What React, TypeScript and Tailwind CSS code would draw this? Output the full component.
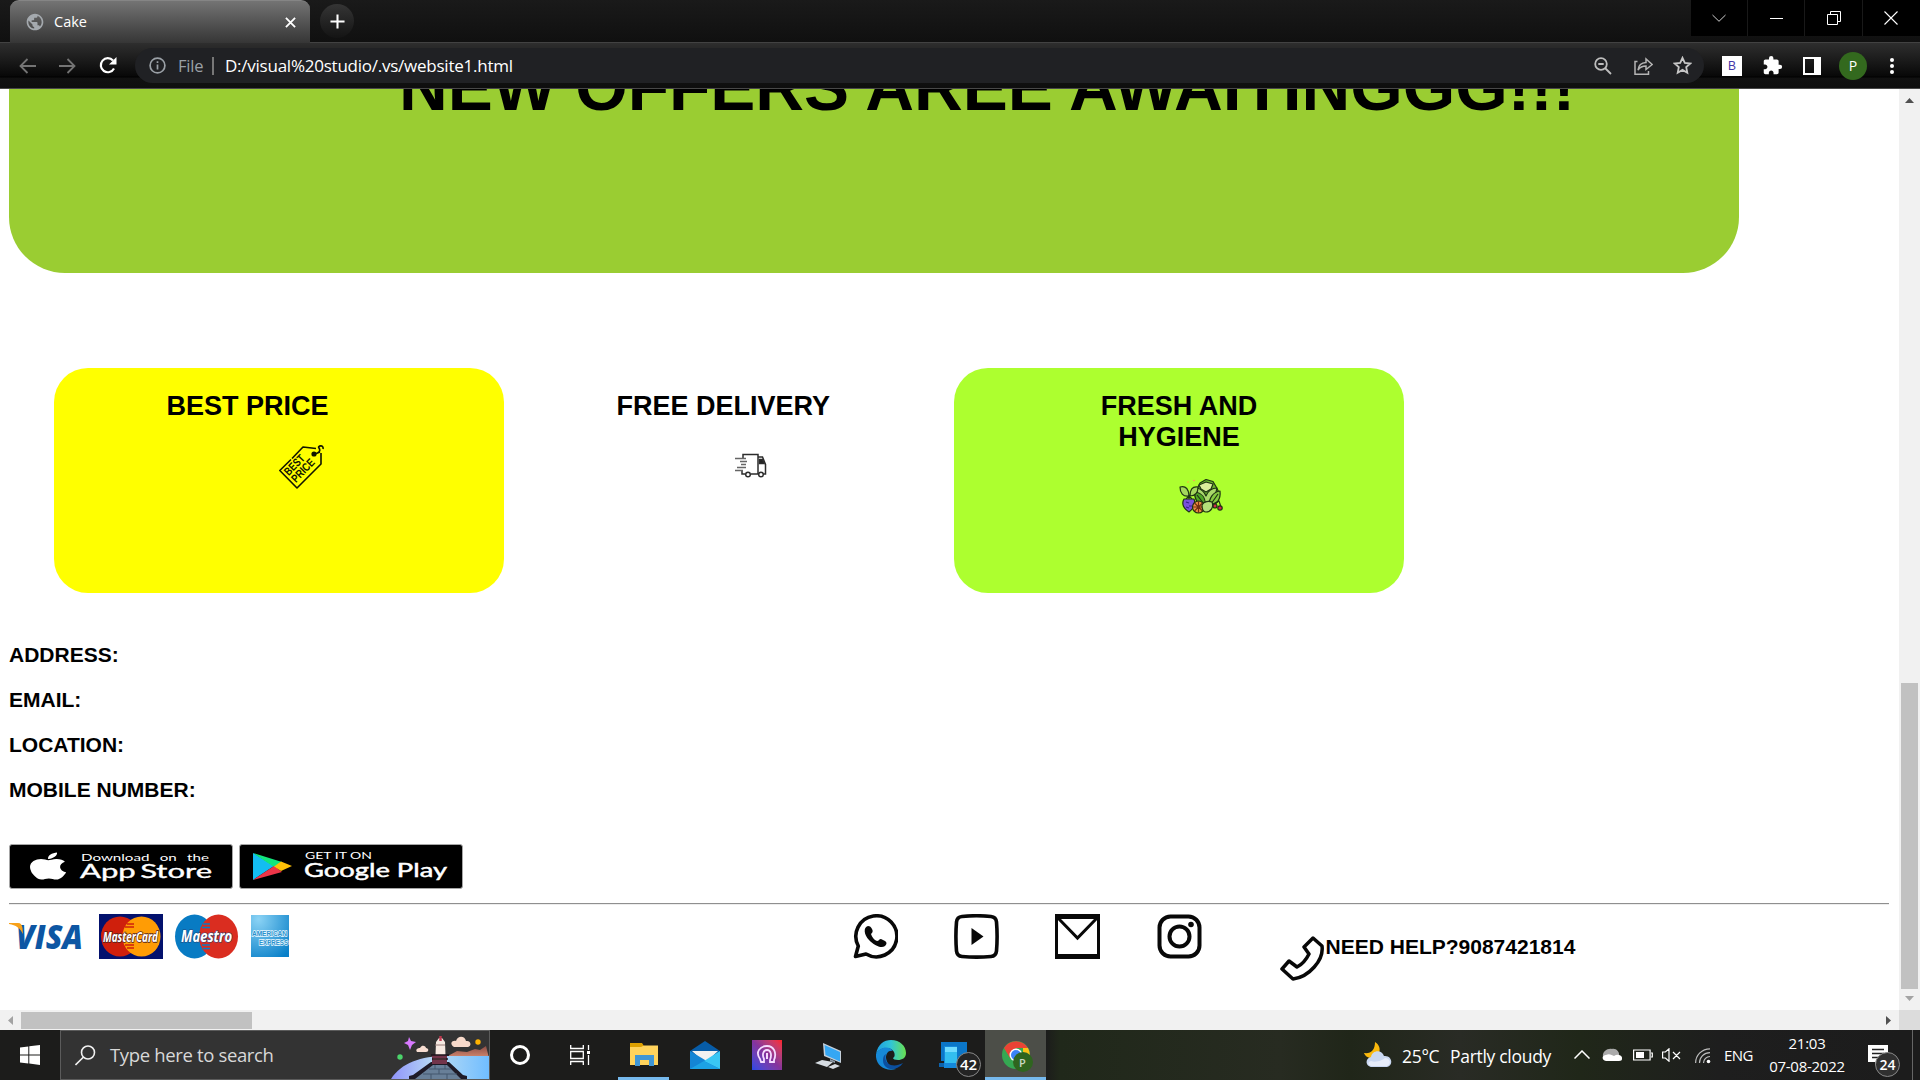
import React from 'react';
import { FaApple } from 'react-icons/fa';
import { MdExtension, MdPublic } from 'react-icons/md';

const segoe = "font-['Open_Sans','Noto_Sans',sans-serif]";

function TabStrip() {
  return (
    <div className="flex h-[42px] items-start bg-linear-to-b from-[#1a1a1a] to-[#101010]">
      <div className="ml-[10px] flex h-[43px] w-[300px] items-center rounded-t-[9px] border-t border-[#858585] bg-linear-to-b from-[#747474] to-[#363636] pr-[14px] pl-[15px]">
        <MdPublic className="size-5 text-[#a4a9ae]" />
        <span className="ml-[9px] flex-1 text-[14.5px] leading-5 text-white">Cake</span>
        <svg className="size-[11px]" viewBox="0 0 12 12" stroke="#fff" strokeWidth="2"><path d="M1 1l10 10M11 1L1 11" /></svg>
      </div>
      <div className="mt-[4px] ml-[10px] flex size-[34px] items-center justify-center rounded-full bg-linear-to-b from-[#353535] to-[#141414]">
        <svg className="size-[15px]" viewBox="0 0 16 16" stroke="#fff" strokeWidth="2.2"><path d="M8 .5v15M.5 8h15" /></svg>
      </div>
      <div className="ml-auto flex h-9 w-[229px] divide-x divide-[#191919] bg-black">
        <div className="flex w-[57px] items-center justify-center">
          <svg className="h-2 w-[14px]" viewBox="0 0 14 8" fill="none" stroke="#d0d0d0"><path d="M.5 1L7 7.300 13.500 1" /></svg>
        </div>
        <div className="flex w-[57px] items-center justify-center"><div className="h-px w-[13px] bg-white" /></div>
        <div className="flex w-[58px] items-center justify-center">
          <svg className="size-[14px]" viewBox="0 0 14 14" fill="none" stroke="#fff"><path d="M.5 3.500h10v10H.5zM3.500 3V.5h10v10H11" /></svg>
        </div>
        <div className="flex flex-1 items-center justify-center pr-px">
          <svg className="size-[14px]" viewBox="0 0 14 14" stroke="#fff" strokeWidth="1.1"><path d="M.5.5l13 13M13.500.5l-13 13" /></svg>
        </div>
      </div>
    </div>
  );
}

function Toolbar() {
  return (
    <div className="flex h-[47px] items-center border-t border-b border-t-[#424242] border-b-[#484848] bg-[linear-gradient(#2e2e2e_0px,#1c1c1c_16px,#080808_33px,#000_34px,#111_35px,#0e0e0e_46px)]">
      <svg className="ml-[19px] h-4 w-[17px]" viewBox="0 0 17 16" fill="none" stroke="#747474" strokeWidth="1.8"><path d="M17 8H1.500M8.500 1l-7 7 7 7" /></svg>
      <svg className="ml-[23px] h-4 w-[17px]" viewBox="0 0 17 16" fill="none" stroke="#747474" strokeWidth="1.8"><path d="M0 8h15.500M8.500 1l7 7-7 7" /></svg>
      <svg className="ml-[23px] h-[17px] w-[18px]" viewBox="0 0 18 17" fill="none" stroke="#fff" strokeWidth="2.2"><path d="M15 11.500A7 7 0 1 1 14 3.500" /><path d="M17.500 0v7.500H10z" fill="#fff" stroke="none" /></svg>
      <div className="ml-[18px] flex h-[35px] w-[1569px] items-center rounded-full bg-[#202124] pr-[12px] pl-[14px]">
        <svg className="size-[17px]" viewBox="0 0 17 17" fill="none" stroke="#9aa0a6" strokeWidth="1.7"><circle cx="8.5" cy="8.5" r="7.4" /><path d="M8.500 7.500v5M8.500 4.200v1.900" /></svg>
        <span className="ml-[12px] w-[34px] text-[16.5px] leading-5 tracking-[-0.2px] text-[#9aa0a6]">File</span>
        <div className="h-[18px] w-[2px] bg-[#777]" />
        <span className="ml-[11px] flex-1 text-[17px] leading-5 tracking-[-0.24px] text-white">D:/visual%20studio/.vs/website1.html</span>
        <svg className="size-[18px]" viewBox="0 0 18 18" fill="none" stroke="#bdbdbd" strokeWidth="1.8"><circle cx="7" cy="7" r="5.8" /><path d="M11 11l6 6M4.300 7h5.400" /></svg>
        <svg className="ml-[22px] h-[18px] w-[19px]" viewBox="0 0 19 18" fill="none" stroke="#b4b4b4" strokeWidth="1.5"><path d="M3.500 4.500H1v12.700h13.500V14M4 13c.6-5 3.500-7.200 8-7.400V2l6.200 5.500L12 12.500V9C8.500 9 6 10 4 13z" /></svg>
        <svg className="ml-[20px] size-[19px]" viewBox="0 0 19 19" fill="none" stroke="#c6c6c6" strokeWidth="1.8"><path d="M9.500 1.800l2.300 5.100 5.500.6-4.100 3.700 1.100 5.500-4.800-2.800-4.800 2.800 1.100-5.500-4.100-3.700 5.500-.6z" /></svg>
      </div>
      <div className="ml-[18px] flex size-5 items-center justify-center bg-white font-['Liberation_Sans',sans-serif] text-[12px] text-[#4437a8]">B</div>
      <MdExtension className="ml-[20px] size-[21px] text-white" />
      <div className="ml-[20px] h-[18px] w-[18px] border-2 border-r-[7px] border-white" />
      <div className="ml-[18px] flex size-7 items-center justify-center rounded-full bg-[#33691e] text-[14px] text-white">P</div>
      <div className="ml-[23px] flex flex-col gap-[2px]">
        <i className="size-1 rounded-full bg-white" /><i className="size-1 rounded-full bg-white" /><i className="size-1 rounded-full bg-white" />
      </div>
    </div>
  );
}

function PriceTag() {
  return (
    <svg className="size-[45px]" viewBox="0 0 45 45" fill="none" stroke="#111500" strokeWidth="1.600">
      <path d="M13 14.500L24 3l13 1.500M42 9v11L18 44 .8 26.500 12 15.500" strokeLinejoin="round" />
      <circle cx="35" cy="10" r="1.800" fill="#111500" /><path d="M35 10c5-1 7-3 5-6-2-2 5-4 4 1M36 10l5-2" />
      <g fill="#111500" stroke="none" fontFamily="Liberation Sans" fontSize="11.500" fontWeight="bold" transform="translate(10.500 31.500) rotate(-46)">
        <text x="-1" y="0" textLength="24" lengthAdjust="spacingAndGlyphs">BEST</text>
        <text x="-1" y="10" textLength="28" lengthAdjust="spacingAndGlyphs">PRICE</text>
      </g>
    </svg>
  );
}

function Truck() {
  return (
    <svg className="h-[25px] w-[32px]" viewBox="0 0 32 25" fill="none" stroke="#2c2c2c" strokeWidth="1.500">
      <path d="M8 5V1.500h15V21H16M10 21H7v-3M23 4h4.500l3 7.500V21h-3M23 21h1" />
      <path d="M24.500 6.500h3l1.500 4h-4.500z" fill="#222" />
      <circle cx="13" cy="21.500" r="2.300" fill="#fff" /><circle cx="26" cy="21.500" r="2.300" fill="#fff" />
      <path d="M0 5.500h11M5 8.500h7M6 11.500h5M2 14.500h9M0 17.500h8" stroke="#666" />
    </svg>
  );
}

function Vegetables() {
  return (
    <svg className="h-[35px] w-[44px]" viewBox="0 0 44 35" stroke="#1f3313" strokeWidth="1.2" strokeLinejoin="round">
      <path d="M18 10l3-6 6-3.500 7 2 3.500 6 2.500 5-1 9-9 7-10-4-4-9z" fill="#69b52c" />
      <path d="M20 6l7-3 7 2-2 5-5 3-5-3z" fill="#dcee9c" />
      <path d="M18 9c4 1 7 3 9 8 2-5 5-8 11-8-1 7-4 11-9 14h-4c-4-2-7-7-7-14z" fill="#a9d86a" />
      <path d="M16 13c7 1 11 6 10 14-7-1-11-7-10-14z" fill="#4fa425" />
      <path d="M41 12c1 8-3 14-11 15 0-8 4-14 11-15z" fill="#85c940" />
      <path d="M18 16l7 9M39 15l-7 10" fill="none" />
      <path d="M1 8c6-2 9 3 9 9-6 1-9-3-9-9zM19 8c0 6-3 9-8 9 0-6 2-10 8-9z" fill="#a4d75d" />
      <path d="M10 16v5M7 20l3-3 3 3" fill="none" />
      <path d="M5 20h10c2 5-1 10-5 13-5-3-8-8-5-13z" fill="#7952dc" />
      <path d="M7 23l3 1M10 27h4M7 28l3 1" stroke="#35208a" />
      <circle cx="19.500" cy="28" r="6" fill="#ef8d42" /><path d="M19.500 22v12M14 28h11M15.500 24l8 8M23.500 24l-8 8" stroke="#713012" />
      <path d="M23 26c2-4 7-4 10-3 2 5-1 10-6 10-3 0-4-3-4-7z" fill="#b4df7a" />
      <path d="M34 25l6-3 2 6" fill="none" /><circle cx="36" cy="27" r="2" fill="#d42352" /><circle cx="41" cy="29" r="2.200" fill="#d42352" />
      <circle cx="9" cy="3" r=".8" fill="#ffad3d" stroke="none" /><circle cx="15" cy="1.500" r=".8" fill="#ff8b66" stroke="none" />
    </svg>
  );
}

function OfferCard({ title, bg, children }: { title: React.ReactNode; bg: string; children: React.ReactNode }) {
  return (
    <div className={'flex h-[225px] w-[450px] flex-col rounded-[34px] px-[112.5px] pt-[23px] ' + bg}>
      <h3 className="w-fit max-w-full text-center text-[27px] leading-[31px] font-bold">{title}</h3>
      {children}
    </div>
  );
}

function StoreBadges() {
  return (
    <div className="mt-[42px] ml-[9px] flex gap-[6px]">
      <div className="flex h-[45px] w-[224px] overflow-hidden rounded-[3px] border border-[#a6a6a6] bg-black">
        <FaApple className="mt-[7px] ml-[20px] h-[28px] w-[36px] text-white" viewBox="4 24 376 464" preserveAspectRatio="none" />
        <svg className="h-[43px] w-[155px]" viewBox="0 0 155 43" fill="#fff" fontFamily="Lato">
          <text x="15" y="16" fontSize="9.500" wordSpacing="4" textLength="128" lengthAdjust="spacingAndGlyphs">Download on the</text>
          <text x="14" y="32.500" fontSize="18.500" wordSpacing="-2" stroke="#fff" strokeWidth=".35" textLength="132" lengthAdjust="spacingAndGlyphs">App Store</text>
        </svg>
      </div>
      <div className="flex h-[45px] w-[224px] overflow-hidden rounded-[3px] border border-[#a6a6a6] bg-black">
        <svg className="mt-[8px] ml-[12px] h-[27px] w-[41px]" viewBox="0 0 41 27">
          <path d="M1 0v27L22 13z" fill="#13bdf2" /><path d="M1 0l29 9-8 5z" fill="#12e77c" /><path d="M1 27l29-8-8-6z" fill="#ed3548" /><path d="M29 8.500L40 13l-11 5-7-4.500z" fill="#ffc107" />
        </svg>
        <svg className="h-[43px] w-[168px]" viewBox="0 0 168 43" fill="#fff" fontFamily="Lato">
          <text x="12" y="14" fontSize="9" textLength="67" lengthAdjust="spacingAndGlyphs">GET IT ON</text>
          <text x="11" y="31.500" fontSize="18.500" stroke="#fff" strokeWidth=".45" textLength="143" lengthAdjust="spacingAndGlyphs">Google Play</text>
        </svg>
      </div>
    </div>
  );
}

function PaymentLogos() {
  return (
    <div className="flex items-start">
      <svg className="h-[45px] w-[75px]" viewBox="0 0 75 45">
        <g fontFamily="Open Sans" fontWeight="800" fontStyle="italic" fill="#0d56a3"><text x="7" y="34.500" fontSize="34" textLength="67" lengthAdjust="spacingAndGlyphs">VISA</text></g>
        <path d="M0 9h9c3 0 4 2 4.500 5l.5 6C11 14 7 11 0 10z" fill="#f7a11a" />
      </svg>
      <svg className="ml-[14.500px] h-[45px] w-[64px]" viewBox="0 0 64 45">
        <path d="M0 0h64v45H0z" fill="#03116d" />
        <ellipse cx="21" cy="22.500" rx="19" ry="20" fill="#cf1f0c" /><ellipse cx="42.500" cy="22.500" rx="19" ry="20" fill="#ff9c05" />
        <path d="M28 10h7M26 13h9M26 31h9M28 34h7" stroke="#cf1f0c" strokeWidth="1.500" />
        <text x="4" y="27.500" fontFamily="Open Sans" fontStyle="italic" fontWeight="bold" fontSize="14" fill="#fff" stroke="#53201a" strokeWidth="1.500" paintOrder="stroke" textLength="55" lengthAdjust="spacingAndGlyphs">MasterCard</text>
      </svg>
      <svg className="ml-[11px] h-[45px] w-[65px]" viewBox="0 0 65 45">
        <ellipse cx="20.500" cy="22.500" rx="19.500" ry="22" fill="#087bc3" /><ellipse cx="44.500" cy="22.500" rx="19.500" ry="22" fill="#da2d20" />
        <path d="M29 10h7M28 13.500h8M28 31h8M29 34.500h7" stroke="#087bc3" strokeWidth="1.500" />
        <text x="7" y="27.500" fontFamily="Open Sans" fontStyle="italic" fontWeight="bold" fontSize="16" fill="#fff" stroke="#24477c" strokeWidth="1.200" paintOrder="stroke" textLength="51" lengthAdjust="spacingAndGlyphs">Maestro</text>
      </svg>
      <svg className="mt-px ml-[12.500px] h-[42px] w-[38px]" viewBox="0 0 38 42">
        <defs><radialGradient id="amex" cx=".2" cy=".1" r="1.100"><stop stopColor="#8bd3f5" /><stop offset="1" stopColor="#087fc8" /></radialGradient></defs>
        <path d="M0 0h38v42H0z" fill="url(#amex)" />
        <g fontFamily="Liberation Sans" fontWeight="bold" fontSize="7.500" fill="#2a91cd" stroke="#e7f7ff" strokeWidth="1.400" paintOrder="stroke">
          <text x="1" y="21" textLength="35" lengthAdjust="spacingAndGlyphs">AMERICAN</text><text x="8" y="29.500" textLength="29" lengthAdjust="spacingAndGlyphs">EXPRESS</text>
        </g>
      </svg>
    </div>
  );
}

function SocialLinks() {
  const icon = 'size-[45px]';
  return (
    <div className="ml-[564px] flex gap-[56.200px]">
      <svg className={icon} viewBox="0 0 45 45" fill="none" stroke="#080808" strokeWidth="3.600">
        <path d="M2.500 42.500l2.800-10.500A20.500 20.500 0 1 1 13 40z" strokeLinejoin="round" />
        <path d="M15 12c-5 1-4 9 1 14s12 9 16 6c2-2 2-4 0-5l-4-2c-2 0-2 2-4 2-3-1-5-4-6-7 2-2 2-3 1-5-1-2-2-3-4-3z" fill="#080808" stroke="none" />
      </svg>
      <svg className={icon} viewBox="0 0 45 45" fill="none" stroke="#080808" strokeWidth="3.600"><path d="M8 2.500Q22.500 1 37 2.500 42 3 42.500 8q1.200 14.500 0 29-.5 5-5.500 5.500-14.500 1.200-29 0-5-.5-5.500-5.500-1.200-14.500 0-29Q3 3 8 2.500z" /><path d="M17.500 14v17L29.500 22.500z" fill="#080808" stroke="none" /></svg>
      <svg className={icon} viewBox="0 0 45 45" fill="none" stroke="#080808"><path d="M0 2.500h45M0 42.500h45" strokeWidth="5" /><path d="M1.500 1v43M43.500 1v43M3 4l19.500 20L42 4" strokeWidth="3" /></svg>
      <svg className={icon} viewBox="0 0 45 45" fill="none" stroke="#080808" strokeWidth="4"><rect x="2.500" y="2.500" width="40" height="40" rx="11" /><circle cx="22.500" cy="22.500" r="10" /><circle cx="34" cy="10.500" r="2.800" fill="#080808" stroke="none" /></svg>
    </div>
  );
}

function Page() {
  return (
    <main className="h-[921px] w-[1899px] overflow-hidden bg-white font-['Liberation_Sans',Arial,sans-serif] text-black">
      <div className="ml-[9px] h-[184px] w-[1730px] rounded-b-[56px] bg-[#9acd32] pl-[390px]">
        <h1 className="-mt-[41px] inline-block text-[67.5px] leading-[78px] font-bold whitespace-nowrap">NEW OFFERS AREE AWAITINGGG!!!</h1>
      </div>
      <section className="mt-[95px] ml-[54px] flex">
        <OfferCard title="BEST PRICE" bg="bg-[yellow]"><div className="mt-[22px] ml-[112px]"><PriceTag /></div></OfferCard>
        <OfferCard title="FREE DELIVERY" bg="bg-white"><div className="mt-[31px] ml-[118px]"><Truck /></div></OfferCard>
        <OfferCard title="FRESH AND HYGIENE" bg="bg-[greenyellow]"><div className="mt-[26px] ml-[112px]"><Vegetables /></div></OfferCard>
      </section>
      <section className="mt-[50px] ml-[9px] flex flex-col gap-[21px] text-[21px] leading-6 font-bold">
        <p>ADDRESS:</p><p>EMAIL:</p><p>LOCATION:</p><p>MOBILE NUMBER:</p>
      </section>
      <StoreBadges />
      <div className="mt-[14px] ml-[9px] h-[2px] w-[1880px] border-t border-b border-t-[#8f8f8f] border-b-[#ededed]" />
      <footer className="mt-[9px] ml-[9px] flex items-start">
        <PaymentLogos />
        <SocialLinks />
        <svg className="mt-[22px] ml-[78px] size-[45px]" viewBox="0 0 45 45" fill="none" stroke="#080808" strokeWidth="3.500" strokeLinejoin="round"><path d="M33 2l9 8c2 14-13 31-29 33L2 33l7-8 8 6c4-2 9-7 12-13l-5-7z" /></svg>
        <p className="mt-[21px] ml-px text-[21px] leading-6 font-bold">NEED HELP?9087421814</p>
      </footer>
    </main>
  );
}

function Landscape() {
  return (
    <svg className="ml-auto h-[48px] w-[98px]" viewBox="2 0 98 48">
      <defs>
        <linearGradient id="lake"><stop stopColor="#8f93fa" /><stop offset=".45" stopColor="#b9dcf4" /><stop offset="1" stopColor="#70bdff" /></linearGradient>
        <linearGradient id="hill" x2="0" y2="1"><stop stopColor="#8c4d46" /><stop offset="1" stopColor="#d58a70" /></linearGradient>
      </defs>
      <path d="M57 26l11-6 10 1 8-3 5 1 6-4 3 12z" fill="url(#hill)" />
      <path d="M2 48C12 32 32 25 57 25h43v23z" fill="url(#lake)" />
      <path d="M20 48v-3l4-1 18-13h18l14 13 4 1v3z" fill="#1e1a26" /><path d="M26 48l18-14h14l14 14z" fill="#687f98" />
      <path d="M40 38h22M34 43h34M46 34v4M56 34v4M50 38v5M42 43v5M58 43v5" stroke="#43566c" />
      <path d="M43 24h15v9H43z" fill="#72344a" /><path d="M44 28h13" stroke="#c98080" strokeWidth="2" />
      <path d="M47 11l3-4h3l3 4 .5 13h-10z" fill="#f6e9e1" /><path d="M46 14h10" stroke="#987c78" /><path d="M51.500 5v5" stroke="#bd394f" strokeWidth="2.500" />
      <path d="M42 24h18M43 28h16" stroke="#1d131b" strokeWidth="1.500" />
      <path d="M20 6l2 4 5 1-4 3-2 5-2-5-4-2 4-2z" fill="#d87aff" /><circle cx="11" cy="26" r="2.700" fill="#4bd46b" /><circle cx="89" cy="11" r="2.700" fill="#ffb300" />
      <path d="M65 16c-5-3-2-7 2-6 2-6 9-5 10 0 5-1 6 5 2 6z" fill="#f7d9ca" /><path d="M28 21c-2-3 1-4 3-4 2-4 6-2 6 0 3 0 3 4 0 4z" fill="#f7ddd1" />
    </svg>
  );
}

function Taskbar() {
  return (
    <div className={'flex h-[50px] items-start bg-[linear-gradient(90deg,#1c1c1b_0px,#1c1c1b_1046px,#20281a_1060px,#272b21_1280px,#202619_1350px,#292b25_1460px,#202719_1580px,#1e1e1e_1720px,#1c1c1c_1900px)] text-white ' + segoe}>
      <svg className="mt-[15px] ml-5 size-5" viewBox="0 0 20 20" fill="#fff"><path d="M0 2.600l8.300-1.100v8H0zM9.300 1.300L20 0v9.500H9.300zM0 10.500h8.300v8L0 17.400zM9.300 10.500H20V20L9.300 18.600z" /></svg>
      <div className="ml-5 flex h-[50px] w-[430px] items-center border border-[#5b5b5b] bg-[#333]">
        <svg className="ml-[14px] size-[21px]" viewBox="0 0 21 21" fill="none" stroke="#f2f2f2" strokeWidth="1.600"><circle cx="13" cy="7.500" r="6.500" /><path d="M8.300 12.300L.5 20" /></svg>
        <span className="ml-[14px] text-[18.5px] leading-6 tracking-[-0.35px] text-[#d8d8d8]">Type here to search</span>
        <Landscape />
      </div>
      <div className="mt-[15px] ml-5 size-[20px] rounded-full border-[3px] border-white" />
      <svg className="mt-[15px] ml-[40px] h-5 w-[21px]" viewBox="0 0 21 20" fill="none" stroke="#fff" strokeWidth="1.300"><path d="M.7 0v3.500h12.600V0M.7 6.500h12.600v7H.7zM.7 20v-3.500h12.600V20M18.500 0v5M18.500 10v10" /><path d="M17 6h3v3h-3z" fill="#fff" stroke="none" /></svg>
      <div className="ml-[27px] flex h-[50px] w-[51px] justify-center border-b-[3px] border-[#76b9ed]">
        <svg className="mt-[13px] h-[23px] w-7" viewBox="0 0 28 23"><path d="M0 0h12l2 3h14v19H0z" fill="#dda000" /><path d="M0 4h11l3-1.500h14V22H0z" fill="#ffd35c" /><path d="M5 12h19v11h-5v-6h-9v6H5z" fill="#4096d5" /></svg>
      </div>
      <svg className="mt-[11px] ml-[21px] h-7 w-[30px]" viewBox="0 0 30 28"><path d="M0 10L15 0l15 10v18H0z" fill="#075ca7" /><path d="M2 10h26L15 22z" fill="#f1f1f1" /><path d="M0 10l30 18H0z" fill="#1485d5" /><path d="M30 10v18L14 20z" fill="#39c7f4" /><path d="M0 28l14-8 16 8z" fill="#1ca2e5" /></svg>
      <div className="mt-[10px] ml-[32px] flex size-[30px] items-center justify-center bg-linear-to-tr from-[#2647e8] via-[#85339d] via-50% to-[#ff2020]">
        <svg className="size-[22px]" viewBox="0 0 22 22" fill="none" stroke="#f5dcff" strokeWidth="1.800"><path d="M5 18l-1-3C-1 8 4 2 11 2s10 7 7 14v2h-4v-2c2-5 1-10-3-10s-5 5-3 9v3z" /><path d="M11 9v6" strokeWidth="2" /></svg>
      </div>
      <svg className="mt-[13px] ml-[33px] h-[26px] w-7" viewBox="0 0 28 26"><path d="M8 0l18 8v12L9 13z" fill="#c5d0db" /><path d="M9.500 2L25 9v9.500L10.500 12z" fill="#35a7f4" /><path d="M0 20l7-3 11 2-6 5z" fill="#d6dce2" /><path d="M13 24l7-3 5 2-7 3z" fill="#d6dce2" /><path d="M15 16l5 2v2l-5-2z" fill="#8b98a5" /></svg>
      <svg className="mt-[10px] ml-[33px] size-[30px]" viewBox="0 0 30 30">
        <defs><linearGradient id="edge"><stop stopColor="#1d9de2" /><stop offset=".5" stopColor="#31c5d6" /><stop offset="1" stopColor="#69e04f" /></linearGradient></defs>
        <path d="M0 14C2 4 8 0 15 0c9 0 15 6 15 13 0 5-4 7-8 7-3 0-5-1-5-2 2-1 2-4 1-6C15 6 4 7 0 14z" fill="url(#edge)" />
        <path d="M0 14c3-7 13-9 17-3-5-1-7 3-7 7 1 7 6 10 10 11C9 32-1 25 0 14z" fill="#1689d8" /><path d="M10 14c-3 9 6 15 17 9-6 9-20 8-20-3 0-3 1-5 3-6z" fill="#0b4f9f" />
      </svg>
      <div className="relative ml-[33px] h-[50px] w-[28px]">
        <svg className="mt-[12px] h-[26px] w-7" viewBox="0 0 28 26"><path d="M2 0h26v19H2z" fill="#0b76c8" /><path d="M0 21h8v4H0z" fill="#0d63ad" /><path d="M5 4h13v22H5z" fill="#1488db" /><path d="M6 5h12v16H6z" fill="#33bef0" /><path d="M6 5h12v5H6z" fill="#70dcff" /></svg>
        <span className="absolute top-[22px] left-[17px] flex size-[25px] items-center justify-center rounded-full border border-[#888] bg-[#242424] text-[15px] leading-none font-semibold">42</span>
      </div>
      <div className="ml-[18px] flex h-[50px] w-[61px] justify-center border-b-[3px] border-[#76b9ed] bg-[#4c4e48]">
        <div className="relative mt-[11px] size-7">
          <svg className="size-7" viewBox="0 0 28 28"><circle cx="14" cy="14" r="14" fill="#35a852" /><path d="M2 7a14 14 0 0 1 24 0H14L8 17z" fill="#ea4335" /><path d="M26 7a14 14 0 0 1-12 21l7-11V7z" fill="#fbc116" /><circle cx="14" cy="14" r="6.500" fill="#fff" /><circle cx="14" cy="14" r="5" fill="#3b83f5" /></svg>
          <span className="absolute top-[11px] left-[11px] flex size-5 items-center justify-center rounded-full bg-[#2f651f] text-[11px] leading-none font-semibold text-[#c9d9c3]">P</span>
        </div>
      </div>
      <svg className="mt-[12px] ml-[318px] h-[26px] w-[29px]" viewBox="0 0 29 26"><path d="M11 0c8 5 5 15-3 16-4 0-7-2-8-5 7 1 11-3 11-11z" fill="#fbb90d" /><path d="M8 25c-6 0-8-8-1-10C8 8 18 7 20 14c8-1 10 9 3 11z" fill="#cad8f2" /><path d="M8 24c-4 0-5-4-1-5 5 2 12-1 14-3 5 0 7 6 2 8z" fill="#e7edfa" /></svg>
      <span className="mt-[14px] ml-[9px] w-[48px] text-[17.5px] leading-6 tracking-[-0.3px]">25°C</span>
      <span className="mt-[14px] w-[122px] text-[17.5px] leading-6 tracking-[-0.3px] whitespace-nowrap">Partly cloudy</span>
      <svg className="mt-[20px] ml-[2px] h-[9px] w-4" viewBox="0 0 16 9" fill="none" stroke="#fff" strokeWidth="1.500"><path d="M.5 8.500L8 1l7.500 7.500" /></svg>
      <svg className="mt-[18px] ml-[12px] h-[14px] w-5" viewBox="0 0 20 14"><path d="M1 9C0 3 6 0 10 1c4-1 8 3 7 7z" fill="#aaa" /><path d="M4 13c-5-1-4-6 0-6 3-2 6 0 8 1 4-3 9 0 8 3 0 1-1 2-3 2z" fill="#fff" /></svg>
      <svg className="mt-[19px] ml-[11px] h-3 w-[20px]" viewBox="0 0 20 12" fill="none" stroke="#fff" strokeWidth="1.200"><path d="M.6 1h16.500v10H.6zM18 4h1.300v4H18" /><path d="M3 3h8v6H3z" fill="#fff" stroke="none" /></svg>
      <svg className="mt-[18px] ml-[9px] h-[14px] w-[19px]" viewBox="0 0 19 14" fill="none" stroke="#fff" strokeWidth="1.200"><path d="M.6 4h2.800L7 .8v12.400L3.400 10H.6zM11 4l7 7M18 4l-7 7" /></svg>
      <svg className="mt-[18px] ml-[14px] h-[16px] w-4" viewBox="0 0 16 16" fill="none" stroke="#bdbdbd" strokeWidth="1.200"><path d="M.6 15C.6 7 7 .8 15 .8M4.500 15C4.500 9 9 4.700 15 4.700M8.500 15c0-3.500 3-6.500 6.500-6.500" /><circle cx="13.500" cy="13.500" r="1.800" fill="#fff" stroke="none" /></svg>
      <span className="mt-[15px] ml-[13px] w-[44px] text-[15px] leading-5 tracking-[-0.6px]">ENG</span>
      <div className="mt-[2px] flex w-[78px] flex-col items-center text-[15px] leading-[23px] tracking-[-0.27px] whitespace-nowrap"><span>21:03</span><span>07-08-2022</span></div>
      <div className="relative ml-[21px] h-[50px] w-[46px] border-r border-[#666]">
        <svg className="mt-[15px] ml-px h-[21px] w-5" viewBox="0 0 20 21"><path d="M0 0h20v17H11l-4 3.500V17H0z" fill="#fff" /><path d="M4 4.500h12M4 8.500h12M4 12.500h8" stroke="#222" strokeWidth="1.300" /></svg>
        <span className="absolute top-[22px] left-[8px] flex size-[25px] items-center justify-center rounded-full border border-[#888] bg-[#303030] text-[14px] leading-none font-semibold">24</span>
      </div>
    </div>
  );
}

export default function App() {
  return (
    <div className="flex h-[1080px] w-[1920px] flex-col overflow-hidden bg-white">
      <header className={segoe}><TabStrip /><Toolbar /></header>
      <div className="flex h-[921px]">
        <Page />
        <div className="flex w-[21px] flex-col items-center bg-[#f1f1f1]">
          <svg className="mt-[9px] h-[5px] w-[9px]" viewBox="0 0 9 5" fill="#505050"><path d="M0 5L4.500 0 9 5z" /></svg>
          <div className="mt-[580px] h-[306px] w-[17px] bg-[#c1c1c1]" />
          <svg className="mt-[7px] h-[5px] w-[9px]" viewBox="0 0 9 5" fill="#a3a3a3"><path d="M0 0l4.500 5L9 0z" /></svg>
        </div>
      </div>
      <div className="flex h-[20px] items-center bg-[#f1f1f1]">
        <svg className="ml-[8px] h-[9px] w-[5px]" viewBox="0 0 5 9" fill="#a3a3a3"><path d="M5 0L0 4.500 5 9z" /></svg>
        <div className="ml-[8px] h-[17px] w-[231px] bg-[#c1c1c1]" />
        <svg className="mr-[8px] ml-auto h-[9px] w-[5px]" viewBox="0 0 5 9" fill="#505050"><path d="M0 0l5 4.500L0 9z" /></svg>
        <div className="h-5 w-[21px] bg-[#dcdcdc]" />
      </div>
      <Taskbar />
    </div>
  );
}
